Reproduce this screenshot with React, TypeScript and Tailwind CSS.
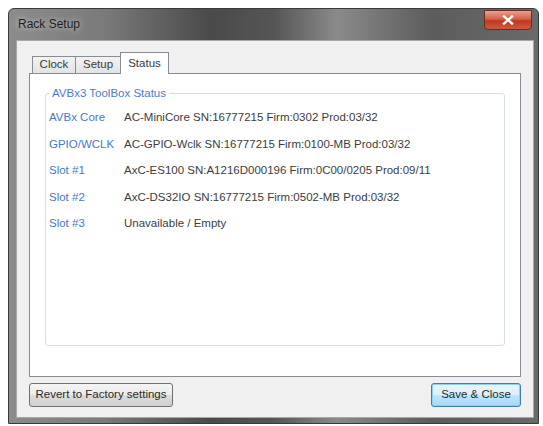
import React from "react";

const rows = [
  { label: "AVBx Core", value: "AC-MiniCore SN:16777215 Firm:0302 Prod:03/32" },
  { label: "GPIO/WCLK", value: "AC-GPIO-Wclk SN:16777215 Firm:0100-MB Prod:03/32" },
  { label: "Slot #1", value: "AxC-ES100 SN:A1216D000196 Firm:0C00/0205 Prod:09/11" },
  { label: "Slot #2", value: "AxC-DS32IO SN:16777215 Firm:0502-MB Prod:03/32" },
  { label: "Slot #3", value: "Unavailable / Empty" },
];

const App: React.FC = () => {
  return (
    <div className="w-[543px] h-[426px] bg-white pt-[8px] pl-[8px] font-['Liberation_Sans',Arial,sans-serif]">
      {/* window frame */}
      <div className="w-[531px] h-[416px] flex flex-col rounded-t-[6px] border border-[#3a3a3a] bg-[linear-gradient(90deg,#8c8c8c_0%,#7a7a7a_18%,#4a4a4a_38%,#555_50%,#8a8a8a_62%,#5c5c5c_80%,#6a6a6a_100%)]">
        {/* title bar */}
        <div className="h-[31px] flex items-start justify-between pl-[9px] pr-[6px]">
          <span className="mt-[8px] text-[12px] leading-[14px] text-[#1e1e1e] [text-shadow:0_0_6px_rgba(255,255,255,0.7)]">
            Rack Setup
          </span>
          <div className="mt-[1px] w-[48px] h-[20px] rounded-b-[4px] rounded-t-[1px] border border-[#6b2a22] bg-[linear-gradient(180deg,#e9a192_0%,#d4604a_45%,#c2381f_55%,#cf5a3e_100%)] flex items-center justify-center">
            <svg width="12" height="10" viewBox="0 0 12 10">
              <path d="M2 1.5 L10 8.5 M10 1.5 L2 8.5" stroke="#fff" strokeWidth="2.4" strokeLinecap="square" />
            </svg>
          </div>
        </div>

        {/* client area */}
        <div className="flex-1 ml-[7px] mr-[4px] mb-[5px] border border-[#a8a8a8] bg-[#f0f0f0] flex flex-col px-[12px] pt-[11px] pb-[10px]">
          {/* tabs */}
          <div className="h-[21px] flex items-end pl-[3px] text-[11.5px] text-[#3a3a3a]">
            <div className="w-[44px] h-[17px] border border-b-0 border-[#898c95] bg-[linear-gradient(180deg,#f2f2f2,#e3e3e3)] flex items-center justify-center">
              Clock
            </div>
            <div className="w-[45px] h-[17px] border border-b-0 border-l-0 border-[#898c95] bg-[linear-gradient(180deg,#f2f2f2,#e3e3e3)] flex items-center justify-center">
              Setup
            </div>
            <div className="relative z-10 -ml-[1px] -mb-[1px] w-[49px] h-[22px] border border-b-0 border-[#898c95] bg-white flex items-start justify-center pt-[2px]">
              Status
            </div>
          </div>

          {/* tab panel */}
          <div className="h-[304px] border border-[#898c95] bg-white px-[15px] pt-[12px]">
            <fieldset className="h-[260px] border border-[#d5dfe5] rounded-[3px] pl-[3px]">
              <legend className="px-[3px] text-[11.5px] leading-[14px] text-[#4a7bcc]">AVBx3 ToolBox Status</legend>
              <div className="pt-[4px] grid grid-cols-[75px_1fr] text-[11.5px] leading-[26.5px]">
                {rows.map((r) => (
                  <React.Fragment key={r.label}>
                    <span className="text-[#4a77c4]">{r.label}</span>
                    <span className="text-[#3c3c3c] whitespace-nowrap">{r.value}</span>
                  </React.Fragment>
                ))}
              </div>
            </fieldset>
          </div>

          {/* buttons */}
          <div className="mt-[6px] flex justify-between text-[11.5px] text-[#2a2a2a]">
            <button className="w-[144px] h-[24px] rounded-[3px] border border-[#707070] bg-[linear-gradient(180deg,#f4f4f4_0%,#ebebeb_50%,#dcdcdc_50%,#d0d0d0_100%)]">
              Revert to Factory settings
            </button>
            <button className="w-[90px] h-[24px] rounded-[3px] border border-[#3c7fb1] shadow-[0_0_0_1px_#8fd0f2_inset] bg-[linear-gradient(180deg,#eaf6fd_0%,#d9f0fc_50%,#bee6fd_50%,#a7d9f5_100%)]">
              Save &amp; Close
            </button>
          </div>
        </div>
      </div>
    </div>
  );
};

export default App;
